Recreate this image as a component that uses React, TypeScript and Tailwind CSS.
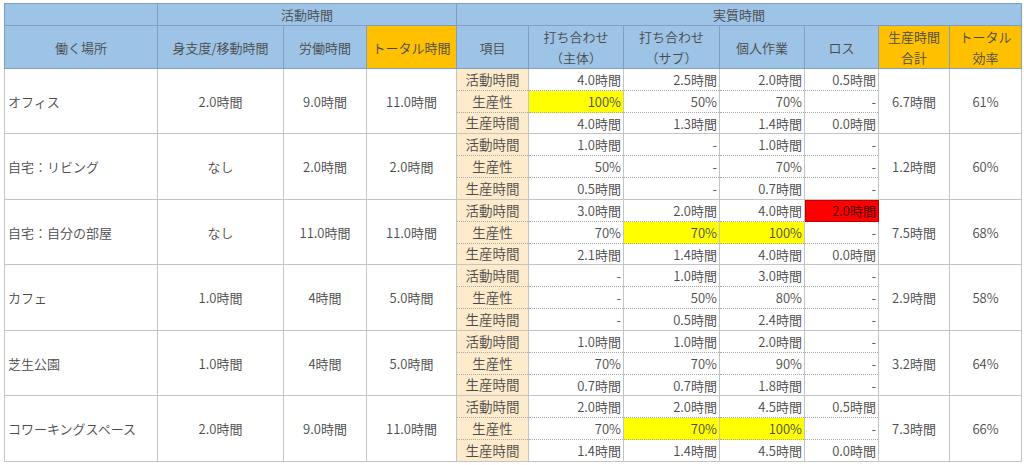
import React from "react";

type Cell = { v: string; hl?: "y" | "r" };
type Group = {
  place: string;
  prep: string;
  work: string;
  total: string;
  rows: Cell[][];
  sum: string;
  eff: string;
};

const c = (v: string, hl?: "y" | "r"): Cell => ({ v, hl });

const groups: Group[] = [
  {
    place: "オフィス",
    prep: "2.0時間",
    work: "9.0時間",
    total: "11.0時間",
    rows: [
      [c("4.0時間"), c("2.5時間"), c("2.0時間"), c("0.5時間")],
      [c("100%", "y"), c("50%"), c("70%"), c("-")],
      [c("4.0時間"), c("1.3時間"), c("1.4時間"), c("0.0時間")],
    ],
    sum: "6.7時間",
    eff: "61%",
  },
  {
    place: "自宅：リビング",
    prep: "なし",
    work: "2.0時間",
    total: "2.0時間",
    rows: [
      [c("1.0時間"), c("-"), c("1.0時間"), c("-")],
      [c("50%"), c("-"), c("70%"), c("-")],
      [c("0.5時間"), c("-"), c("0.7時間"), c("-")],
    ],
    sum: "1.2時間",
    eff: "60%",
  },
  {
    place: "自宅：自分の部屋",
    prep: "なし",
    work: "11.0時間",
    total: "11.0時間",
    rows: [
      [c("3.0時間"), c("2.0時間"), c("4.0時間"), c("2.0時間", "r")],
      [c("70%"), c("70%", "y"), c("100%", "y"), c("-")],
      [c("2.1時間"), c("1.4時間"), c("4.0時間"), c("0.0時間")],
    ],
    sum: "7.5時間",
    eff: "68%",
  },
  {
    place: "カフェ",
    prep: "1.0時間",
    work: "4時間",
    total: "5.0時間",
    rows: [
      [c("-"), c("1.0時間"), c("3.0時間"), c("-")],
      [c("-"), c("50%"), c("80%"), c("-")],
      [c("-"), c("0.5時間"), c("2.4時間"), c("-")],
    ],
    sum: "2.9時間",
    eff: "58%",
  },
  {
    place: "芝生公園",
    prep: "1.0時間",
    work: "4時間",
    total: "5.0時間",
    rows: [
      [c("1.0時間"), c("1.0時間"), c("2.0時間"), c("-")],
      [c("70%"), c("70%"), c("90%"), c("-")],
      [c("0.7時間"), c("0.7時間"), c("1.8時間"), c("-")],
    ],
    sum: "3.2時間",
    eff: "64%",
  },
  {
    place: "コワーキングスペース",
    prep: "2.0時間",
    work: "9.0時間",
    total: "11.0時間",
    rows: [
      [c("2.0時間"), c("2.0時間"), c("4.5時間"), c("0.5時間")],
      [c("70%"), c("70%", "y"), c("100%", "y"), c("-")],
      [c("1.4時間"), c("1.4時間"), c("4.5時間"), c("0.0時間")],
    ],
    sum: "7.3時間",
    eff: "66%",
  },
];

const labels = ["活動時間", "生産性", "生産時間"];
const widths = [153, 126, 83, 90, 72, 95, 96, 85, 74, 71, 72];

const hBlue = "bg-[#9dc3e6] border border-[#7f9fc2] font-[350]";
const hOrange = "bg-[#ffc000] border border-[#7f9fc2] font-[350]";
const solid = "border border-[#c4c4c4]";

export default function App() {
  return (
    <div
      className="min-h-[465px] w-[1024px] bg-white pl-[4px] pt-[3px] text-[13px] font-[350] leading-none text-[#4a4a4a]"
      style={{ fontFamily: '"Noto Sans CJK JP", "Noto Sans", sans-serif' }}
    >
      <table className="table-fixed border-collapse">
        <colgroup>
          {widths.map((w, i) => (
            <col key={i} style={{ width: w }} />
          ))}
        </colgroup>
        <thead>
          <tr className="h-[22px]">
            <th className={hBlue} />
            <th colSpan={3} className={hBlue}>
              活動時間
            </th>
            <th colSpan={7} className={hBlue}>
              実質時間
            </th>
          </tr>
          <tr className="h-[43px] leading-[21px]">
            <th className={hBlue}>働く場所</th>
            <th className={hBlue}>身支度/移動時間</th>
            <th className={hBlue}>労働時間</th>
            <th className={hOrange}>トータル時間</th>
            <th className={hBlue}>項目</th>
            <th className={hBlue}>
              打ち合わせ
              <br />
              （主体）
            </th>
            <th className={hBlue}>
              打ち合わせ
              <br />
              （サブ）
            </th>
            <th className={hBlue}>個人作業</th>
            <th className={hBlue}>ロス</th>
            <th className={hOrange}>
              生産時間
              <br />
              合計
            </th>
            <th className={hOrange}>
              トータル
              <br />
              効率
            </th>
          </tr>
        </thead>
        <tbody>
          {groups.map((g, gi) =>
            g.rows.map((row, ri) => {
              const last = ri === 2;
              const sub = last
                ? "border-b border-b-[#c4c4c4]"
                : "border-b border-b-[#a8a8a8] [border-bottom-style:dotted]";
              const h = ri === 2 && gi % 2 === 0 ? "h-[21px]" : "h-[22px]";
              return (
                <tr key={`${gi}-${ri}`} className={h}>
                  {ri === 0 && (
                    <>
                      <td rowSpan={3} className={`${solid} pl-[3px] text-left`}>
                        {g.place}
                      </td>
                      <td rowSpan={3} className={`${solid} text-center`}>
                        {g.prep}
                      </td>
                      <td rowSpan={3} className={`${solid} text-center`}>
                        {g.work}
                      </td>
                      <td rowSpan={3} className={`${solid} text-center`}>
                        {g.total}
                      </td>
                    </>
                  )}
                  <td
                    className={`border-x border-x-[#c4c4c4] bg-[#fdebcb] text-center text-[13.5px] ${sub}`}
                  >
                    {labels[ri]}
                  </td>
                  {row.map((cell, ci) => (
                    <td
                      key={ci}
                      className={`border-x border-x-[#c4c4c4] pr-[2px] text-right ${sub} ${
                        cell.hl === "y"
                          ? "bg-[#ffff00]"
                          : cell.hl === "r"
                            ? "bg-[#ff0000] outline outline-1 -outline-offset-1 outline-[#c00000] text-[#3a0000]"
                            : ""
                      }`}
                    >
                      {cell.v}
                    </td>
                  ))}
                  {ri === 0 && (
                    <>
                      <td rowSpan={3} className={`${solid} text-center`}>
                        {g.sum}
                      </td>
                      <td rowSpan={3} className={`${solid} text-center`}>
                        {g.eff}
                      </td>
                    </>
                  )}
                </tr>
              );
            }),
          )}
        </tbody>
      </table>
    </div>
  );
}
